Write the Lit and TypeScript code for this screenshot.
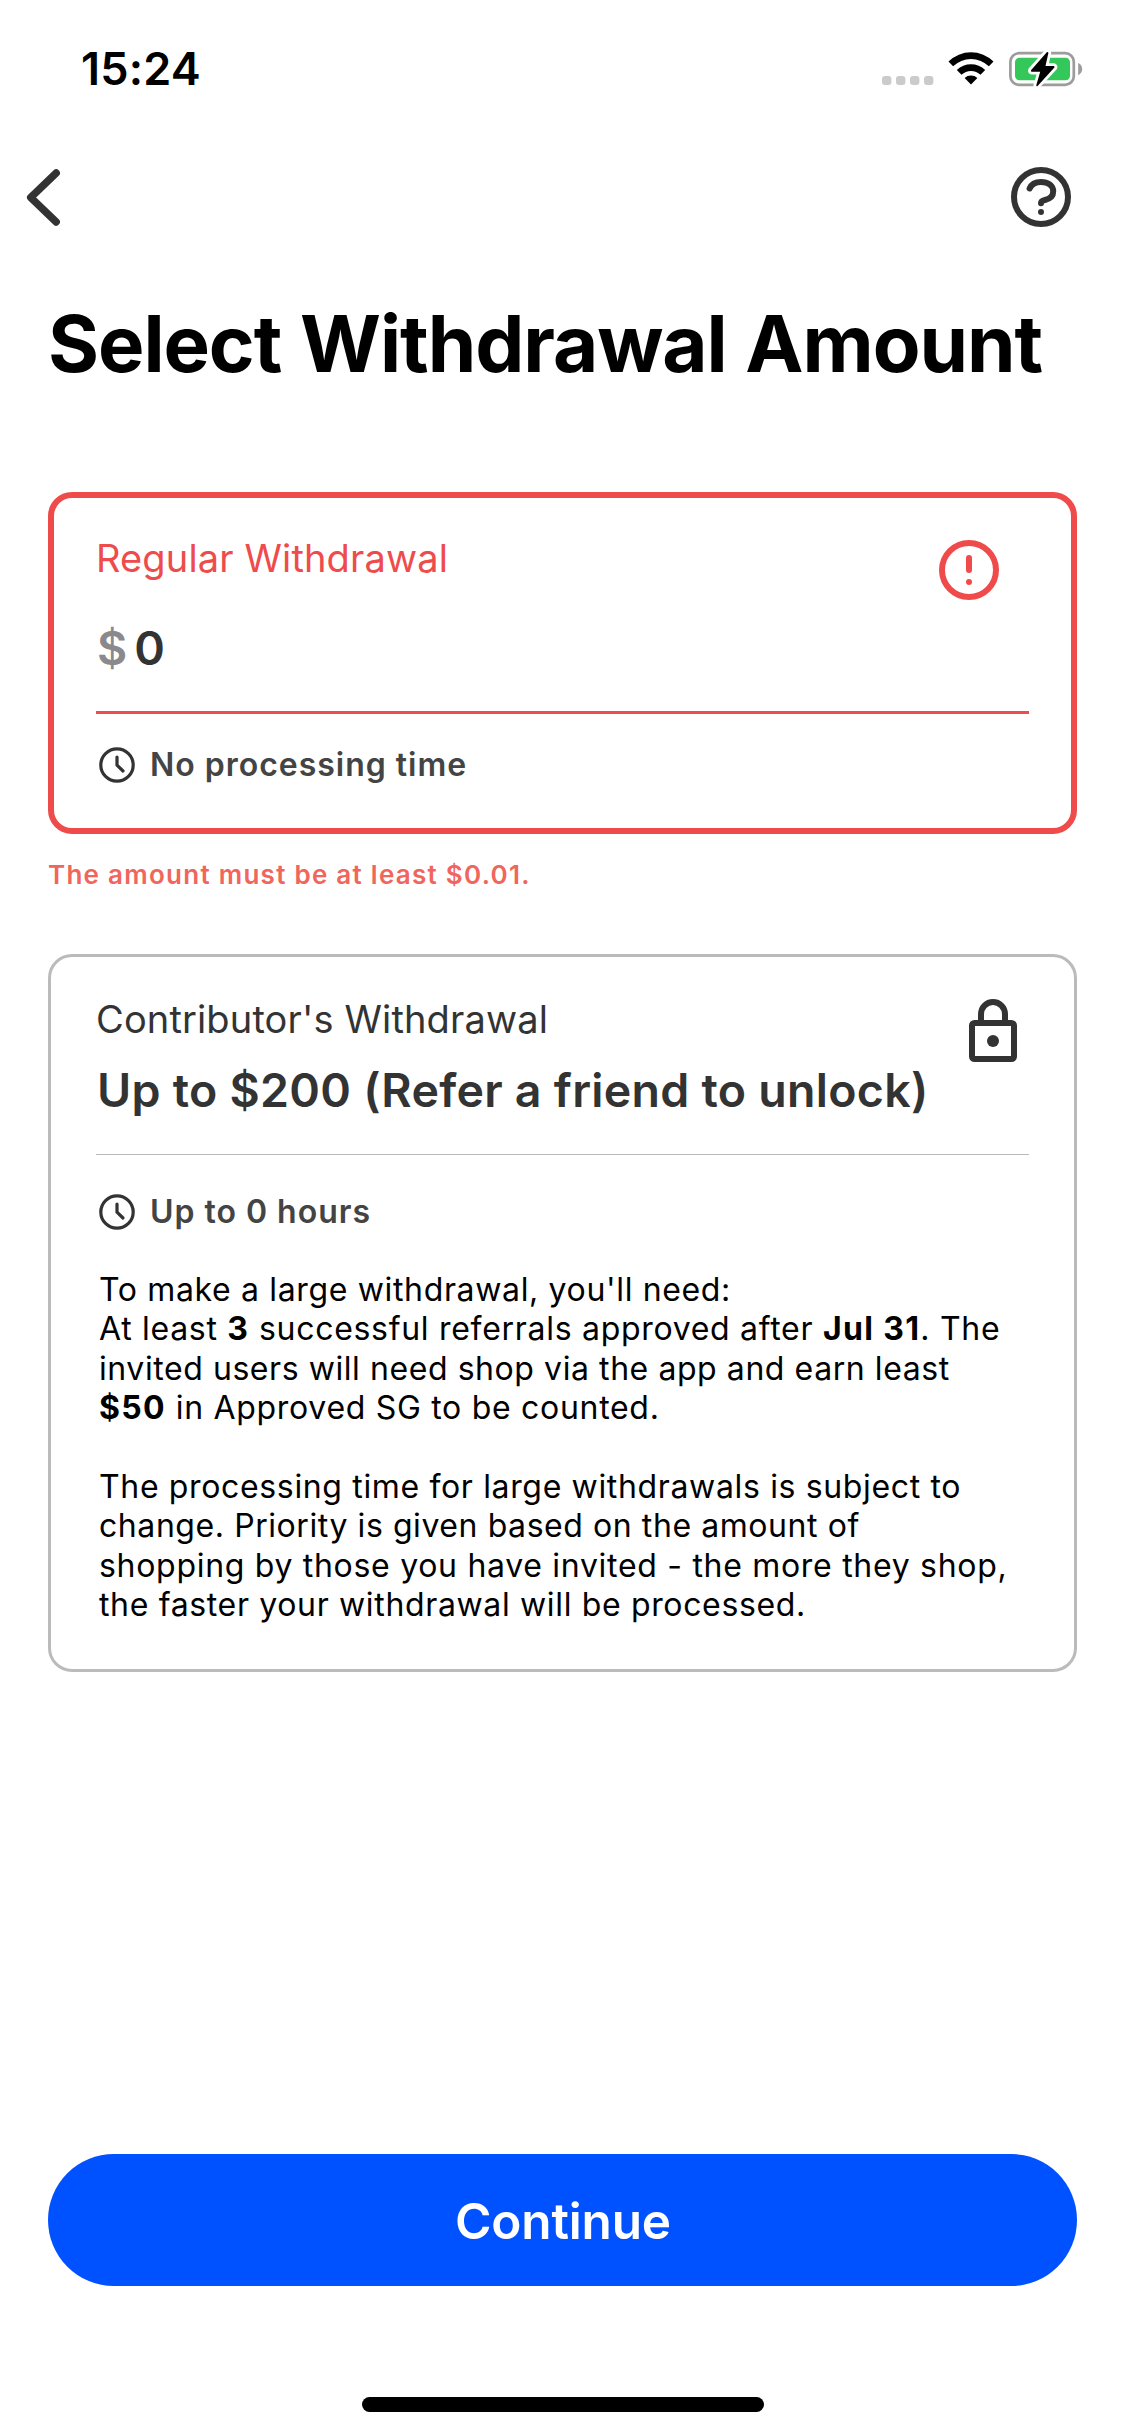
import { LitElement, html, svg, css } from "lit";
import { customElement, property } from "lit/decorators.js";

const clockIcon = html`<svg width="38" height="38" viewBox="0 0 38 38" fill="none" stroke="#333" stroke-width="3.2">
  <circle cx="19" cy="19" r="16.2"></circle>
  <path d="M19 11v8.2l6 5.8" stroke-linecap="round" stroke-linejoin="round"></path>
</svg>`;

const boltPath =
  "M37.8 1.2L22 19.2q-.6 1.2.8 1.5h8.4L27.2 34.5q.3 1.2 1.4.4L45.4 16.6q.6-1.3-.8-1.6h-8.1L39.4 2q-.4-1.4-1.6-.8z";

@customElement("status-bar")
export class StatusBar extends LitElement {
  static styles = css`
    :host {
      display: flex;
      justify-content: space-between;
      height: 132px;
      box-sizing: border-box;
      padding: 42px 41px 0 81px;
    }
    .time {
      font-size: 45px;
      line-height: 54px;
      font-weight: 600;
      letter-spacing: 0.2px;
      color: #000;
    }
    .indicators {
      display: flex;
      align-items: flex-end;
      height: 45px;
    }
    .cell {
      margin: 0 14px 2px 0;
    }
    .wifi {
      margin: 0 15px 2px 0;
    }
    .battery {
      margin-bottom: -1px;
    }
  `;

  render() {
    return html`
      <span class="time">15:24</span>
      <span class="indicators">
        <svg class="cell" width="52" height="9" viewBox="0 0 52 9" fill="#cbcbcb">
          ${[0, 14, 28, 42].map((x) => svg`<rect x=${x} y="0" width="9.4" height="9" rx="3"></rect>`)}
        </svg>
        <svg class="wifi" width="46" height="33" viewBox="0 0 46 33">
          <path d="M0.5 9.6a32 32 0 0 1 45 0l-4.6 4.7a25.6 25.6 0 0 0-35.8 0z"></path>
          <path d="M8.8 18a20.4 20.4 0 0 1 28.4 0l-4.7 4.8a13.8 13.8 0 0 0-19 0z"></path>
          <path d="M16.6 25.9a9.6 9.6 0 0 1 12.8 0L23 32.6z"></path>
        </svg>
        <svg class="battery" width="75" height="37" viewBox="0 0 75 37">
          <rect x="1.4" y="2.2" width="63.4" height="31.6" rx="8.6" fill="none" stroke="#9c9c9c" stroke-width="2.7"></rect>
          <path d="M69.2 12v12.2c2.7-1.2 4-3.6 4-6.1s-1.3-4.9-4-6.1z" fill="#9c9c9c"></path>
          <rect x="6" y="6.7" width="55" height="22.6" rx="4.5" fill="#34c759"></rect>
          <path d=${boltPath} stroke="#fff" stroke-width="5.6" stroke-linejoin="round"></path>
          <path d=${boltPath}></path>
        </svg>
      </span>
    `;
  }
}

@customElement("nav-bar")
export class NavBar extends LitElement {
  static styles = css`
    :host {
      display: flex;
      align-items: center;
      justify-content: space-between;
      height: 130px;
      box-sizing: border-box;
      padding: 0 54px 0 24px;
    }
  `;

  render() {
    return html`
      <svg width="40" height="62" viewBox="0 0 40 62" fill="none" stroke="#333" stroke-width="7.4" stroke-linecap="round" stroke-linejoin="round">
        <path d="M32.2 7L6.7 31.5L32.2 56"></path>
      </svg>
      <svg width="60" height="60" viewBox="0 0 60 60" fill="none" stroke="#333" stroke-width="6">
        <circle cx="30" cy="30" r="27"></circle>
        <path d="M18.6 21.5C20.4 17.3 24.8 15 30 15c7 0 12.2 3.5 12.2 9.5c0 5-4.2 7.5-8.2 8.5c-2.6.6-4 1.5-4 3.3" stroke-linecap="round" stroke-linejoin="round"></path>
        <circle cx="30" cy="45" r="3" fill="#333" stroke="none"></circle>
      </svg>
    `;
  }
}

@customElement("withdrawal-card")
export class WithdrawalCard extends LitElement {
  @property() label = "";
  @property() meta = "";
  @property({ type: Boolean }) invalid = false;

  static styles = css`
    .card {
      box-sizing: border-box;
      border: 3px solid #bbb;
      border-radius: 24px;
      padding: 39px 45px 0;
      height: 718px;
      background: #fff;
    }
    .head {
      display: grid;
      grid-template-columns: 1fr auto;
    }
    .label {
      font-size: 38px;
      line-height: 46px;
      color: #333;
      white-space: nowrap;
      letter-spacing: 0.14px;
    }
    .icon {
      grid-row: 1 / 3;
      grid-column: 2;
      height: 63px;
      margin: 3px 12px 0 0;
    }
    .value {
      grid-column: 1;
      margin-top: 20px;
      padding-left: 1px;
      width: 0;
      font-size: 46.5px;
      line-height: 56px;
      font-weight: 600;
      color: #333;
      white-space: nowrap;
    }
    .rule {
      height: 1px;
      margin-top: 36px;
      background: #bbb;
    }
    .meta {
      display: flex;
      align-items: center;
      gap: 14px;
      margin-top: 37px;
      padding-left: 2px;
      font-size: 32px;
      line-height: 40px;
      font-weight: 600;
      letter-spacing: 0.98px;
      color: #444;
      white-space: nowrap;
    }
    .invalid {
      height: 342px;
      border: 6px solid #ef4b4b;
      padding: 37px 42px 0;
    }
    .invalid .label {
      color: #ee4c4c;
    }
    .invalid .icon {
      height: 60px;
      margin: 5px 30px 0 0;
    }
    .invalid .value {
      margin-top: 39px;
    }
    .invalid .rule {
      height: 3px;
      margin-top: 35px;
      background: #ec4d4d;
    }
    .invalid .meta {
      margin-top: 31px;
    }
  `;

  render() {
    return html`
      <section class="card ${this.invalid ? "invalid" : ""}">
        <div class="head">
          <div class="label">${this.label}</div>
          ${this.invalid
            ? html`<svg class="icon" width="60" height="60" viewBox="0 0 60 60" fill="none" stroke="#ef4b4b" stroke-width="6">
                <circle cx="30" cy="30" r="27"></circle>
                <path d="M30 18v12" stroke-linecap="round"></path>
                <circle cx="30" cy="42" r="3" fill="#ef4b4b" stroke="none"></circle>
              </svg>`
            : html`<svg class="icon" width="48" height="63" viewBox="0 0 48 63" fill="none" stroke="#333" stroke-width="6">
                <rect x="3" y="24" width="42" height="36" rx="2.5"></rect>
                <path d="M12 24v-9a12 12 0 0 1 24 0v9"></path>
                <circle cx="24" cy="42" r="6" fill="#333" stroke="none"></circle>
              </svg>`}
          <div class="value"><slot name="value"></slot></div>
        </div>
        <div class="rule"></div>
        <div class="meta">${clockIcon}<span>${this.meta}</span></div>
        <slot></slot>
      </section>
    `;
  }
}

@customElement("app-root")
export class AppRoot extends LitElement {
  static styles = css`
    :host {
      display: flex;
      flex-direction: column;
      width: 1125px;
      height: 2436px;
      box-sizing: border-box;
      overflow: hidden;
      background: #fff;
      font-family: Inter, "Liberation Sans", sans-serif;
    }
    .content {
      flex: 1;
      padding: 0 48px;
    }
    .title {
      margin: 35px 0 101px;
      font-size: 78px;
      line-height: 94px;
      font-weight: 700;
      letter-spacing: -1.07px;
      word-spacing: 1.5px;
      color: #000;
      white-space: nowrap;
    }
    .amount {
      display: flex;
      gap: 7px;
    }
    .currency {
      color: #8a8a8e;
    }
    .error {
      margin: 25px 0 63px;
      font-size: 26px;
      line-height: 32px;
      font-weight: 600;
      letter-spacing: 1.27px;
      color: #f0655c;
    }
    .offer {
      letter-spacing: 0.27px;
    }
    .terms {
      margin: 38px 0 0 3px;
      font-size: 32px;
      line-height: 39.375px;
      letter-spacing: 0.65px;
      color: #000;
      white-space: nowrap;
    }
    .terms b {
      letter-spacing: 1.35px;
    }
    .paragraph {
      margin: 0 0 39.375px;
    }
    .tight {
      letter-spacing: 0.57px;
    }
    .loose {
      letter-spacing: 0.7px;
    }
    .footer {
      display: flex;
      flex-direction: column;
      align-items: center;
      padding: 0 48px 24px;
    }
    .continue {
      width: 100%;
      height: 132px;
      margin-bottom: 111px;
      border: 0;
      border-radius: 66px;
      background: #0051ff;
      color: #fff;
      font: 600 49.5px/60px Inter, "Liberation Sans", sans-serif;
      letter-spacing: -0.15px;
      padding: 1px 0 0 1px;
    }
    .home {
      width: 402px;
      height: 15px;
      border-radius: 8px;
      background: #000;
    }
  `;

  render() {
    return html`
      <status-bar></status-bar>
      <nav-bar></nav-bar>
      <main class="content">
        <h1 class="title">Select Withdrawal Amount</h1>
        <withdrawal-card invalid label="Regular Withdrawal" meta="No processing time">
          <div class="amount" slot="value"><span class="currency">$</span><span>0</span></div>
        </withdrawal-card>
        <div class="error">The amount must be at least $0.01.</div>
        <withdrawal-card label="Contributor's Withdrawal" meta="Up to 0 hours">
          <div class="offer" slot="value">Up to $200 (Refer a friend to unlock)</div>
          <div class="terms">
            <p class="paragraph">
              To make a large withdrawal, you'll need:<br />
              <span class="loose">At least <b>3</b> successful referrals approved after <b>Jul 31</b>. The</span><br />
              <span class="tight">invited users will need shop via the app and earn least</span><br />
              <span class="loose"><b>$50</b> in Approved SG to be counted.</span>
            </p>
            <p class="paragraph">
              The processing time for large withdrawals is subject to<br />
              <span class="tight">change. Priority is given based on the amount of</span><br />
              <span class="loose">shopping by those you have invited - the more they shop,</span><br />
              the faster your withdrawal will be processed.
            </p>
          </div>
        </withdrawal-card>
      </main>
      <footer class="footer">
        <button class="continue">Continue</button>
        <div class="home"></div>
      </footer>
    `;
  }
}
